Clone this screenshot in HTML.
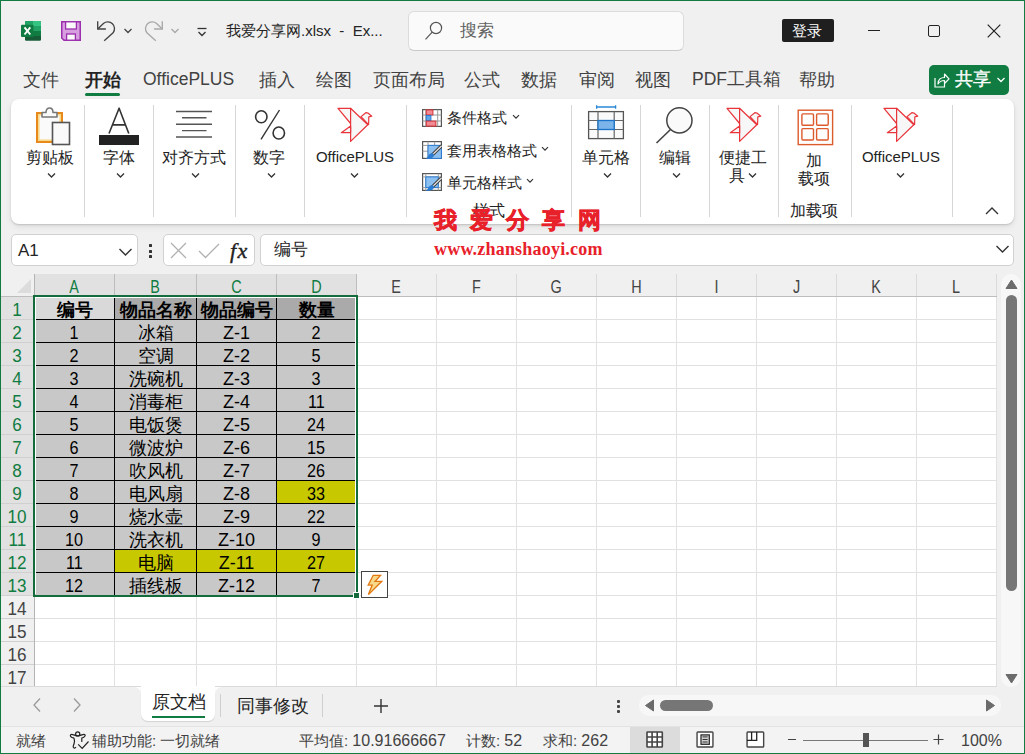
<!DOCTYPE html>
<html><head><meta charset="utf-8">
<style>
*{box-sizing:border-box;margin:0;padding:0}
html,body{width:1025px;height:754px;overflow:hidden;background:#f0f0f0;font-family:"Liberation Sans",sans-serif;color:#242424}
.a{position:absolute}
#win{position:absolute;left:0;top:0;width:1025px;height:754px;border:1px solid #107c41;border-right-width:1px}
.t{position:absolute;white-space:nowrap;line-height:1}
/* ribbon */
#ribbon{position:absolute;left:11px;top:99px;width:1003px;height:125px;background:#fff;border-radius:8px;box-shadow:0 1px 2px rgba(0,0,0,.16),0 3px 6px rgba(0,0,0,.07)}
.sep{position:absolute;top:105px;width:1px;height:112px;background:#d6d6d6}
.lbl{position:absolute;font-size:16px;line-height:1;white-space:nowrap;color:#242424}
.chev{position:absolute}
/* formula bar */
.fbox{position:absolute;top:234px;height:32px;background:#fff;border:1px solid #d1d1d1;border-radius:5px}
/* grid */
#sheet{position:absolute;left:0;top:0}
.vl{position:absolute;top:297px;width:1px;height:389px;background:#e1e1e1}
.hl{position:absolute;left:35px;width:961px;height:1px;background:#e1e1e1}
.ch{position:absolute;top:274px;height:22px;background:#f0f0f0;font-size:18px;line-height:27px;text-align:center;color:#444}
.ch.sel{background:#e1e1e1;color:#107c41}
.chl{position:absolute;top:274px;width:1px;height:22px;background:#bdbdbd}
.rh{position:absolute;left:1px;width:33px;background:#f0f0f0;font-size:18px;line-height:27px;text-align:center;color:#444;border-bottom:1px solid #d0d0d0;height:23px}
.rh.sel{background:#e1e1e1;color:#107c41}
.sx{display:inline-block;transform:scaleX(.8)}.sx2{display:inline-block;transform:scaleX(.95)}
.sx3{display:inline-block;transform:scaleX(.9)}
.cell{position:absolute;height:24px;border:1px solid #000;font-size:18px;line-height:26px;text-align:center;color:#000}
.cell.b{font-weight:bold}
</style></head><body>
<div id="win"></div>

<!-- TITLE BAR -->
<!-- excel icon -->
<svg class="a" style="left:21px;top:21px" width="20" height="20" viewBox="0 0 20 20">
 <rect x="4" y="0" width="16" height="19.8" rx="1.2" fill="#185c37"/>
 <path d="M5.2 0 H12 V5 H4 V1.2 A1.2 1.2 0 0 1 5.2 0 Z" fill="#21a366"/>
 <path d="M12 0 H18.8 A1.2 1.2 0 0 1 20 1.2 V5 H12 Z" fill="#33c481"/>
 <rect x="4" y="5" width="16" height="5" fill="#21a366"/>
 <rect x="4" y="10" width="16" height="5" fill="#107c41"/>
 <rect x="0" y="3.8" width="12.5" height="12.2" rx="1" fill="#107c41"/>
 <path d="M3.5 6.3 L9.3 13.5 M9.3 6.3 L3.5 13.5" stroke="#fff" stroke-width="1.9"/>
</svg>
<!-- save -->
<svg class="a" style="left:61px;top:21px" width="20" height="20" viewBox="0 0 20 20">
 <path d="M0.75 0.75 H19.25 V19.25 H3 L0.75 17 Z" fill="#d79ee0" stroke="#9b2fae" stroke-width="1.5"/>
 <rect x="4.6" y="0.8" width="10.8" height="7.2" fill="#fafafa" stroke="#9b2fae" stroke-width="1.3"/>
 <rect x="5.6" y="13" width="8.8" height="6.2" fill="#fafafa" stroke="#9b2fae" stroke-width="1.3"/>
</svg>
<!-- undo -->
<svg class="a" style="left:96px;top:20px" width="22" height="22" viewBox="0 0 22 22">
 <path d="M1.7 1.2 V9 H9.9" fill="none" stroke="#444" stroke-width="1.35"/>
 <path d="M2 8.7 L7.4 3.4 A6.8 6.8 0 0 1 17.1 12.8 L8.2 20.8" fill="none" stroke="#444" stroke-width="1.35"/>
</svg>
<svg class="a" style="left:123px;top:27px" width="10" height="8" viewBox="0 0 10 8"><path d="M1.5 2 L5 5.5 L8.5 2" fill="none" stroke="#444" stroke-width="1.3"/></svg>
<!-- redo -->
<svg class="a" style="left:143px;top:20px" width="22" height="22" viewBox="0 0 22 22">
 <g transform="translate(21,0) scale(-1,1)">
 <path d="M1.7 1.2 V9 H9.9" fill="none" stroke="#a8a8a8" stroke-width="1.35"/>
 <path d="M2 8.7 L7.4 3.4 A6.8 6.8 0 0 1 17.1 12.8 L8.2 20.8" fill="none" stroke="#a8a8a8" stroke-width="1.35"/>
 </g>
</svg>
<svg class="a" style="left:170px;top:27px" width="10" height="8" viewBox="0 0 10 8"><path d="M1.5 2 L5 5.5 L8.5 2" fill="none" stroke="#a8a8a8" stroke-width="1.3"/></svg>
<!-- customize -->
<svg class="a" style="left:196px;top:26px" width="12" height="12" viewBox="0 0 12 12"><path d="M1.5 2.5 H10.5" stroke="#333" stroke-width="1.3"/><path d="M2.5 6 L6 9.5 L9.5 6" fill="none" stroke="#333" stroke-width="1.3"/></svg>
<div class="t" style="left:226px;top:23px;font-size:15px;color:#242424">我爱分享网.xlsx&nbsp; - &nbsp;Ex...</div>
<!-- search -->
<div class="a" style="left:408px;top:11px;width:276px;height:40px;background:#fafafa;border:1px solid #dcdcdc;border-bottom-color:#c9c9c9;border-radius:6px"></div>
<svg class="a" style="left:424px;top:21px" width="21" height="21" viewBox="0 0 21 21"><circle cx="12" cy="7" r="5.6" fill="none" stroke="#555" stroke-width="1.2"/><path d="M8.2 11.2 L1.5 18.3" stroke="#555" stroke-width="1.2"/></svg>
<div class="t" style="left:460px;top:22px;font-size:17px;color:#616161">搜索</div>
<!-- login -->
<div class="a" style="left:782px;top:19px;width:52px;height:23px;background:#1f1f1f;border-radius:2px"></div>
<div class="t" style="left:792px;top:23px;font-size:15px;color:#fff">登录</div>
<!-- window controls -->
<div class="a" style="left:868px;top:30px;width:12px;height:1px;background:#222"></div>
<div class="a" style="left:928px;top:25px;width:12px;height:12px;border:1.2px solid #222;border-radius:2px"></div>
<svg class="a" style="left:987px;top:24px" width="14" height="14" viewBox="0 0 14 14"><path d="M0.7 0.7 L13.3 13.3 M13.3 0.7 L0.7 13.3" stroke="#222" stroke-width="1.2"/></svg>

<!-- TABS -->
<div class="t" style="left:23px;top:71px;font-size:18px;color:#424242">文件</div>
<div class="t" style="left:85px;top:71px;font-size:18px;color:#242424;font-weight:bold">开始</div>
<div class="a" style="left:85px;top:93px;width:35px;height:3px;background:#107c41;border-radius:2px"></div>
<div class="t" style="left:143px;top:71px;font-size:17.5px;color:#424242">OfficePLUS</div>
<div class="t" style="left:259px;top:71px;font-size:18px;color:#424242">插入</div>
<div class="t" style="left:316px;top:71px;font-size:18px;color:#424242">绘图</div>
<div class="t" style="left:373px;top:71px;font-size:18px;color:#424242">页面布局</div>
<div class="t" style="left:464px;top:71px;font-size:18px;color:#424242">公式</div>
<div class="t" style="left:521px;top:71px;font-size:18px;color:#424242">数据</div>
<div class="t" style="left:579px;top:71px;font-size:18px;color:#424242">审阅</div>
<div class="t" style="left:635px;top:71px;font-size:18px;color:#424242">视图</div>
<div class="t" style="left:692px;top:71px;font-size:17.5px;color:#424242">PDF工具箱</div>
<div class="t" style="left:799px;top:71px;font-size:18px;color:#424242">帮助</div>
<!-- share -->
<div class="a" style="left:929px;top:65px;width:80px;height:30px;background:#107c41;border-radius:5px"></div>
<svg class="a" style="left:934px;top:72px" width="16" height="16" viewBox="0 0 16 16"><path d="M1 6 V15 H10.5 V12" fill="none" stroke="#fff" stroke-width="1.2"/><path d="M4 12 C4 7 7 5.5 10.5 5.5 V2 L15 6.8 L10.5 11.5 V8.5 C8 8.5 5.5 9.5 4 12 Z" fill="none" stroke="#fff" stroke-width="1.2" stroke-linejoin="round"/></svg>
<div class="t" style="left:955px;top:71px;font-size:17.5px;color:#fff;-webkit-text-stroke:0.35px #fff">共享</div>
<svg class="a" style="left:996px;top:76px" width="10" height="8" viewBox="0 0 10 8"><path d="M1.5 2 L5 5.5 L8.5 2" fill="none" stroke="#fff" stroke-width="1.3"/></svg>

<!-- RIBBON -->
<div id="ribbon"></div>
<div class="sep" style="left:84px"></div>
<div class="sep" style="left:153px"></div>
<div class="sep" style="left:235px"></div>
<div class="sep" style="left:304px"></div>
<div class="sep" style="left:406px"></div>
<div class="sep" style="left:571px"></div>
<div class="sep" style="left:640px"></div>
<div class="sep" style="left:709px"></div>
<div class="sep" style="left:778px"></div>
<div class="sep" style="left:851px"></div>
<div class="sep" style="left:952px"></div>

<!-- clipboard -->
<svg class="a" style="left:34px;top:105px" width="40" height="42" viewBox="0 0 40 42">
 <rect x="3" y="8" width="25" height="29" fill="#fdf3d9" stroke="#e8891c" stroke-width="2"/>
 <rect x="4.8" y="9.8" width="21.4" height="25.4" fill="#fafafa" stroke="#f9d98a" stroke-width="1.6"/>
 <path d="M8 12 V7.5 H12 C12 1.5 19 1.5 19 7.5 H23 V12 Z" fill="#fafafa" stroke="#777" stroke-width="1.6" stroke-linejoin="round"/>
 <rect x="18.5" y="17.5" width="17" height="22" fill="#fafafa" stroke="#555" stroke-width="1.6"/>
</svg>
<div class="lbl" style="left:0px;width:100px;top:150px;text-align:center">剪贴板</div>
<!-- font -->
<svg class="a" style="left:98px;top:106px" width="42" height="40" viewBox="0 0 42 40">
 <path d="M11 27.5 L21.1 2.2 L30.8 27.5 M14.3 18.9 H27.6" fill="none" stroke="#333" stroke-width="1.6" stroke-linejoin="round"/>
 <rect x="1" y="29" width="40" height="10" fill="#222"/>
</svg>
<div class="lbl" style="left:69px;width:100px;top:150px;text-align:center">字体</div>
<!-- align -->
<svg class="a" style="left:175px;top:109px" width="38" height="30" viewBox="0 0 38 30">
 <path d="M1 2.5 H37 M7 8.8 H31.5 M1 15.2 H37 M7 21.6 H31.5 M1 28 H37" stroke="#555" stroke-width="1.4"/>
</svg>
<div class="lbl" style="left:144px;width:100px;top:150px;text-align:center">对齐方式</div>
<!-- number -->
<svg class="a" style="left:252px;top:108px" width="36" height="34" viewBox="0 0 36 34">
 <ellipse cx="9.3" cy="8.8" rx="5.7" ry="6" fill="none" stroke="#333" stroke-width="1.6"/>
 <ellipse cx="26.8" cy="25" rx="5.7" ry="6" fill="none" stroke="#333" stroke-width="1.6"/>
 <path d="M27.5 2 L9 31.3" stroke="#333" stroke-width="1.4"/>
</svg>
<div class="lbl" style="left:219px;width:100px;top:150px;text-align:center">数字</div>
<!-- officeplus -->
<svg class="a bird" style="left:337px;top:106px" width="37" height="37" viewBox="0 0 37 37">
 <g fill="#f7f7f7" stroke="#e8353c" stroke-width="1.2" stroke-linejoin="round">
 <path d="M1 2.3 H13.6 V17.5 Z"/>
 <path d="M24 10.6 L28.8 6.7 L31.2 7.2 L34.8 10.2 L31.8 10.9 L31.6 18.6 Z"/>
 <path d="M13.6 2.3 L30.8 18.7 L13.6 35.4 Z"/>
 <path d="M4.3 26.7 L13.6 19.9 V26.7 Z"/>
 </g>
</svg>
<div class="lbl" style="left:305px;width:100px;top:149px;text-align:center;font-size:15px">OfficePLUS</div>
<!-- chevrons row -->
<svg class="a" style="left:47px;top:172px" width="9" height="7" viewBox="0 0 9 7"><path d="M1 1.5 L4.5 5 L8 1.5" fill="none" stroke="#333" stroke-width="1.3"/></svg>
<svg class="a" style="left:116px;top:172px" width="9" height="7" viewBox="0 0 9 7"><path d="M1 1.5 L4.5 5 L8 1.5" fill="none" stroke="#333" stroke-width="1.3"/></svg>
<svg class="a" style="left:191px;top:172px" width="9" height="7" viewBox="0 0 9 7"><path d="M1 1.5 L4.5 5 L8 1.5" fill="none" stroke="#333" stroke-width="1.3"/></svg>
<svg class="a" style="left:267px;top:172px" width="9" height="7" viewBox="0 0 9 7"><path d="M1 1.5 L4.5 5 L8 1.5" fill="none" stroke="#333" stroke-width="1.3"/></svg>
<svg class="a" style="left:350px;top:172px" width="9" height="7" viewBox="0 0 9 7"><path d="M1 1.5 L4.5 5 L8 1.5" fill="none" stroke="#333" stroke-width="1.3"/></svg>
<svg class="a" style="left:603px;top:172px" width="9" height="7" viewBox="0 0 9 7"><path d="M1 1.5 L4.5 5 L8 1.5" fill="none" stroke="#333" stroke-width="1.3"/></svg>
<svg class="a" style="left:672px;top:172px" width="9" height="7" viewBox="0 0 9 7"><path d="M1 1.5 L4.5 5 L8 1.5" fill="none" stroke="#333" stroke-width="1.3"/></svg>
<svg class="a" style="left:748px;top:172px" width="9" height="7" viewBox="0 0 9 7"><path d="M1 1.5 L4.5 5 L8 1.5" fill="none" stroke="#333" stroke-width="1.3"/></svg>
<svg class="a" style="left:896px;top:172px" width="9" height="7" viewBox="0 0 9 7"><path d="M1 1.5 L4.5 5 L8 1.5" fill="none" stroke="#333" stroke-width="1.3"/></svg>

<!-- styles group -->
<svg class="a" style="left:422px;top:109px" width="20" height="18" viewBox="0 0 20 18">
 <rect x="0.6" y="0.6" width="18.8" height="16.8" fill="#fff" stroke="#555" stroke-width="1.2"/>
 <path d="M3.8 0.6 V17.4 M15.7 0.6 V17.4 M0.6 6 H19.4 M0.6 12 H19.4" stroke="#999" stroke-width="1"/>
 <rect x="4.3" y="0.9" width="6.6" height="5" fill="#f28a93" stroke="#d13438" stroke-width="1"/>
 <rect x="4.3" y="6.5" width="4.6" height="5" fill="#5ea6e8" stroke="#2b7cd3" stroke-width="1"/>
 <rect x="4.3" y="12.1" width="9.6" height="5" fill="#f28a93" stroke="#d13438" stroke-width="1"/>
</svg>
<div class="lbl" style="left:447px;top:110px;font-size:15px">条件格式</div>
<svg class="a" style="left:512px;top:114px" width="8" height="6" viewBox="0 0 8 6"><path d="M1 1.2 L4 4.2 L7 1.2" fill="none" stroke="#333" stroke-width="1.2"/></svg>
<svg class="a" style="left:422px;top:141px" width="20" height="18" viewBox="0 0 20 18">
 <rect x="0.6" y="0.6" width="18.8" height="16.8" fill="#fff" stroke="#555" stroke-width="1.2"/>
 <path d="M0.6 4.4 H19.4 M0.6 10.2 H19.4 M6 0.6 V17.4 M12.6 0.6 V17.4" stroke="#9a9a9a" stroke-width="1"/>
 <path d="M6 4.4 H19.4 V17.4 H6 Z" fill="#8cc0f0" stroke="#2b7cd3" stroke-width="1"/>
 <path d="M19.2 5.2 L10.6 13.6" stroke="#444" stroke-width="3.4" stroke-linecap="round"/>
 <path d="M19.2 5.2 L10.6 13.6" stroke="#e8e8e8" stroke-width="1.2" stroke-linecap="round"/>
 <path d="M10.8 12.2 C8.5 11.8 6.8 13.2 6.2 15 C5.8 16.3 4.8 17 3.6 17.6 C6.5 18.2 10.4 17.6 11.6 15.2 C12.2 14 11.8 12.8 10.8 12.2 Z" fill="#2b7cd3"/>
</svg>
<div class="lbl" style="left:447px;top:143px;font-size:15px">套用表格格式</div>
<svg class="a" style="left:541px;top:146px" width="8" height="6" viewBox="0 0 8 6"><path d="M1 1.2 L4 4.2 L7 1.2" fill="none" stroke="#333" stroke-width="1.2"/></svg>
<svg class="a" style="left:422px;top:173px" width="20" height="18" viewBox="0 0 20 18">
 <rect x="0.6" y="0.6" width="18.8" height="16.8" fill="#fff" stroke="#555" stroke-width="1.2"/>
 <path d="M0.6 3.9 H19.4 M3.8 0.6 V17.4 M16.3 0.6 V17.4 M0.6 14.6 H19.4" stroke="#9a9a9a" stroke-width="1"/>
 <path d="M3.8 3.9 H16.3 V14.6 H3.8 Z" fill="#8cc0f0" stroke="#2b7cd3" stroke-width="1"/>
 <path d="M19.2 5.2 L10.6 13.6" stroke="#444" stroke-width="3.4" stroke-linecap="round"/>
 <path d="M19.2 5.2 L10.6 13.6" stroke="#e8e8e8" stroke-width="1.2" stroke-linecap="round"/>
 <path d="M10.8 12.2 C8.5 11.8 6.8 13.2 6.2 15 C5.8 16.3 4.8 17 3.6 17.6 C6.5 18.2 10.4 17.6 11.6 15.2 C12.2 14 11.8 12.8 10.8 12.2 Z" fill="#2b7cd3"/>
</svg>
<div class="lbl" style="left:447px;top:175px;font-size:15px">单元格样式</div>
<svg class="a" style="left:526px;top:178px" width="8" height="6" viewBox="0 0 8 6"><path d="M1 1.2 L4 4.2 L7 1.2" fill="none" stroke="#333" stroke-width="1.2"/></svg>
<div class="lbl" style="left:439px;width:100px;top:203px;text-align:center">样式</div>

<!-- cells -->
<svg class="a" style="left:587px;top:105px" width="38" height="35" viewBox="0 0 38 35">
 <path d="M9.6 2 H28.6 M9.6 0.3 V3.7 M28.6 0.3 V3.7" stroke="#2b88d8" stroke-width="1.3"/>
 <rect x="1.6" y="6.6" width="34.8" height="27" fill="#fafafa" stroke="#555" stroke-width="1.3"/>
 <path d="M11 6.6 V33.6 M27.2 6.6 V33.6 M1.6 15.5 H36.4 M1.6 24.5 H36.4" stroke="#666" stroke-width="1.2"/>
 <rect x="11" y="15.5" width="16.2" height="9" fill="#7ab4ea" stroke="#1a73c8" stroke-width="1.3"/>
</svg>
<div class="lbl" style="left:556px;width:100px;top:150px;text-align:center">单元格</div>
<!-- edit -->
<svg class="a" style="left:654px;top:106px" width="40" height="40" viewBox="0 0 40 40">
 <circle cx="25.4" cy="14.4" r="12.6" fill="#fafafa" stroke="#444" stroke-width="1.5"/>
 <path d="M16.5 23.5 L2.5 37" stroke="#444" stroke-width="1.6"/>
</svg>
<div class="lbl" style="left:625px;width:100px;top:150px;text-align:center">编辑</div>
<!-- quick tools -->
<svg class="a" style="left:726px;top:106px" width="37" height="37" viewBox="0 0 37 37">
 <g fill="#f7f7f7" stroke="#e8353c" stroke-width="1.2" stroke-linejoin="round">
 <path d="M1 2.3 H13.6 V17.5 Z"/>
 <path d="M24 10.6 L28.8 6.7 L31.2 7.2 L34.8 10.2 L31.8 10.9 L31.6 18.6 Z"/>
 <path d="M13.6 2.3 L30.8 18.7 L13.6 35.4 Z"/>
 <path d="M4.3 26.7 L13.6 19.9 V26.7 Z"/>
 </g>
</svg>
<div class="lbl" style="left:693px;width:100px;top:150px;text-align:center">便捷工</div>
<div class="lbl" style="left:729px;top:168px">具</div>
<!-- addins -->
<svg class="a" style="left:797px;top:109px" width="37" height="37" viewBox="0 0 37 37">
 <g fill="none" stroke="#dc5a2c" stroke-width="1.4">
 <rect x="1.2" y="1.2" width="34.4" height="34.4"/>
 <rect x="4.9" y="4.9" width="11.6" height="11.4" rx="1"/>
 <rect x="19.6" y="4.9" width="11.6" height="11.4" rx="1"/>
 <rect x="4.9" y="19.6" width="11.6" height="11.4" rx="1"/>
 <rect x="19.6" y="19.6" width="11.6" height="11.4" rx="1"/>
 </g>
</svg>
<div class="lbl" style="left:764px;width:100px;top:153px;text-align:center">加</div>
<div class="lbl" style="left:764px;width:100px;top:171px;text-align:center">载项</div>
<div class="lbl" style="left:764px;width:100px;top:203px;text-align:center">加载项</div>
<!-- officeplus 2 -->
<svg class="a" style="left:883px;top:106px" width="37" height="37" viewBox="0 0 37 37">
 <g fill="#f7f7f7" stroke="#e8353c" stroke-width="1.2" stroke-linejoin="round">
 <path d="M1 2.3 H13.6 V17.5 Z"/>
 <path d="M24 10.6 L28.8 6.7 L31.2 7.2 L34.8 10.2 L31.8 10.9 L31.6 18.6 Z"/>
 <path d="M13.6 2.3 L30.8 18.7 L13.6 35.4 Z"/>
 <path d="M4.3 26.7 L13.6 19.9 V26.7 Z"/>
 </g>
</svg>
<div class="lbl" style="left:851px;width:100px;top:149px;text-align:center;font-size:15px">OfficePLUS</div>
<svg class="a" style="left:985px;top:206px" width="14" height="10" viewBox="0 0 14 10"><path d="M1 8 L7 2 L13 8" fill="none" stroke="#333" stroke-width="1.4"/></svg>

<!-- watermark -->
<div class="t" style="left:434px;top:209px;font-size:23px;font-weight:900;color:#e8202a;letter-spacing:13px;-webkit-text-stroke:0.7px #e8202a">我爱分享网</div>


<!-- FORMULA BAR -->
<div class="fbox" style="left:11px;width:127px"></div>
<div class="t" style="left:18px;top:242px;font-size:17px;color:#242424">A1</div>
<svg class="a" style="left:118px;top:247px" width="15" height="10" viewBox="0 0 15 10"><path d="M1.5 2 L7.5 8 L13.5 2" fill="none" stroke="#333" stroke-width="1.4"/></svg>
<div class="a" style="left:149px;top:244px;width:3px;height:3px;background:#333;border-radius:0.5px"></div>
<div class="a" style="left:149px;top:249.5px;width:3px;height:3px;background:#333;border-radius:0.5px"></div>
<div class="a" style="left:149px;top:255px;width:3px;height:3px;background:#333;border-radius:0.5px"></div>
<div class="fbox" style="left:163px;width:92px"></div>
<svg class="a" style="left:170px;top:242px" width="17" height="17" viewBox="0 0 17 17"><path d="M1 1 L16 16 M16 1 L1 16" stroke="#b0b0b0" stroke-width="1.3"/></svg>
<svg class="a" style="left:198px;top:242px" width="22" height="17" viewBox="0 0 22 17"><path d="M1 9 L7.5 15.5 L21 2" fill="none" stroke="#b0b0b0" stroke-width="1.3"/></svg>
<div class="t" style="left:230px;top:240px;font-size:22px;font-family:'Liberation Serif',serif;font-style:italic;color:#222;letter-spacing:1.5px;-webkit-text-stroke:0.4px #222">fx</div>
<div class="fbox" style="left:260px;width:754px"></div>
<div class="t" style="left:274px;top:241px;font-size:17px;color:#242424">编号</div>
<svg class="a" style="left:995px;top:244px" width="15" height="10" viewBox="0 0 15 10"><path d="M1.5 2 L7.5 8 L13.5 2" fill="none" stroke="#333" stroke-width="1.4"/></svg>
<div class="t" style="left:434px;top:240px;font-size:18px;font-weight:bold;color:#e8202a;font-family:'Liberation Serif',serif;letter-spacing:0.2px">www.zhanshaoyi.com</div>


<!-- SHEET -->
<div class="a" style="left:35px;top:297px;width:962px;height:389px;background:#fff"></div>
<div class="a" style="left:1px;top:274px;width:33px;height:22px;background:#f0f0f0"></div>
<svg class="a" style="left:16px;top:278px" width="16" height="16" viewBox="0 0 16 16"><path d="M15 1 V15 H1 Z" fill="#dcdcdc"/></svg>
<div class="a" style="left:34px;top:274px;width:1px;height:412px;background:#b4b4b4"></div>
<div class="a" style="left:1px;top:296px;width:996px;height:1px;background:#bdbdbd"></div>
<div class="vl" style="left:114px"></div>
<div class="vl" style="left:196px"></div>
<div class="vl" style="left:276px"></div>
<div class="vl" style="left:356px"></div>
<div class="vl" style="left:436px"></div>
<div class="vl" style="left:516px"></div>
<div class="vl" style="left:596px"></div>
<div class="vl" style="left:676px"></div>
<div class="vl" style="left:756px"></div>
<div class="vl" style="left:836px"></div>
<div class="vl" style="left:916px"></div>
<div class="vl" style="left:996px"></div>
<div class="hl" style="top:319px"></div>
<div class="hl" style="top:342px"></div>
<div class="hl" style="top:365px"></div>
<div class="hl" style="top:388px"></div>
<div class="hl" style="top:411px"></div>
<div class="hl" style="top:434px"></div>
<div class="hl" style="top:457px"></div>
<div class="hl" style="top:480px"></div>
<div class="hl" style="top:503px"></div>
<div class="hl" style="top:526px"></div>
<div class="hl" style="top:549px"></div>
<div class="hl" style="top:572px"></div>
<div class="hl" style="top:595px"></div>
<div class="hl" style="top:618px"></div>
<div class="hl" style="top:641px"></div>
<div class="hl" style="top:664px"></div>
<div class="ch sel" style="left:35px;width:79px"><span class="sx">A</span></div>
<div class="chl" style="left:114px;background:#bdbdbd"></div>
<div class="ch sel" style="left:115px;width:81px"><span class="sx">B</span></div>
<div class="chl" style="left:196px;background:#bdbdbd"></div>
<div class="ch sel" style="left:197px;width:79px"><span class="sx">C</span></div>
<div class="chl" style="left:276px;background:#bdbdbd"></div>
<div class="ch sel" style="left:277px;width:79px"><span class="sx">D</span></div>
<div class="chl" style="left:356px;background:#bdbdbd"></div>
<div class="ch" style="left:357px;width:79px"><span class="sx">E</span></div>
<div class="chl" style="left:436px;background:#dadada"></div>
<div class="ch" style="left:437px;width:79px"><span class="sx">F</span></div>
<div class="chl" style="left:516px;background:#dadada"></div>
<div class="ch" style="left:517px;width:79px"><span class="sx">G</span></div>
<div class="chl" style="left:596px;background:#dadada"></div>
<div class="ch" style="left:597px;width:79px"><span class="sx">H</span></div>
<div class="chl" style="left:676px;background:#dadada"></div>
<div class="ch" style="left:677px;width:79px"><span class="sx">I</span></div>
<div class="chl" style="left:756px;background:#dadada"></div>
<div class="ch" style="left:757px;width:79px"><span class="sx">J</span></div>
<div class="chl" style="left:836px;background:#dadada"></div>
<div class="ch" style="left:837px;width:79px"><span class="sx">K</span></div>
<div class="chl" style="left:916px;background:#dadada"></div>
<div class="ch" style="left:917px;width:79px"><span class="sx">L</span></div>
<div class="chl" style="left:996px;background:#dadada"></div>
<div class="rh sel" style="top:297px"><span class="sx2">1</span></div>
<div class="rh sel" style="top:320px"><span class="sx2">2</span></div>
<div class="rh sel" style="top:343px"><span class="sx2">3</span></div>
<div class="rh sel" style="top:366px"><span class="sx2">4</span></div>
<div class="rh sel" style="top:389px"><span class="sx2">5</span></div>
<div class="rh sel" style="top:412px"><span class="sx2">6</span></div>
<div class="rh sel" style="top:435px"><span class="sx2">7</span></div>
<div class="rh sel" style="top:458px"><span class="sx2">8</span></div>
<div class="rh sel" style="top:481px"><span class="sx2">9</span></div>
<div class="rh sel" style="top:504px"><span class="sx2">10</span></div>
<div class="rh sel" style="top:527px"><span class="sx2">11</span></div>
<div class="rh sel" style="top:550px"><span class="sx2">12</span></div>
<div class="rh sel" style="top:573px"><span class="sx2">13</span></div>
<div class="rh" style="top:596px"><span class="sx2">14</span></div>
<div class="rh" style="top:619px"><span class="sx2">15</span></div>
<div class="rh" style="top:642px"><span class="sx2">16</span></div>
<div class="rh" style="top:665px"><span class="sx2">17</span></div>
<div class="cell b" style="left:34px;top:296px;width:81px;background:#d9d9d9">编号</div>
<div class="cell b" style="left:114px;top:296px;width:83px;background:#aaaaaa">物品名称</div>
<div class="cell b" style="left:196px;top:296px;width:81px;background:#aaaaaa">物品编号</div>
<div class="cell b" style="left:276px;top:296px;width:81px;background:#aaaaaa">数量</div>
<div class="cell" style="left:34px;top:319px;width:81px;background:#c8c8c8"><span class="sx3">1</span></div>
<div class="cell" style="left:114px;top:319px;width:83px;background:#c8c8c8">冰箱</div>
<div class="cell" style="left:196px;top:319px;width:81px;background:#c8c8c8">Z-1</div>
<div class="cell" style="left:276px;top:319px;width:81px;background:#c8c8c8"><span class="sx3">2</span></div>
<div class="cell" style="left:34px;top:342px;width:81px;background:#c8c8c8"><span class="sx3">2</span></div>
<div class="cell" style="left:114px;top:342px;width:83px;background:#c8c8c8">空调</div>
<div class="cell" style="left:196px;top:342px;width:81px;background:#c8c8c8">Z-2</div>
<div class="cell" style="left:276px;top:342px;width:81px;background:#c8c8c8"><span class="sx3">5</span></div>
<div class="cell" style="left:34px;top:365px;width:81px;background:#c8c8c8"><span class="sx3">3</span></div>
<div class="cell" style="left:114px;top:365px;width:83px;background:#c8c8c8">洗碗机</div>
<div class="cell" style="left:196px;top:365px;width:81px;background:#c8c8c8">Z-3</div>
<div class="cell" style="left:276px;top:365px;width:81px;background:#c8c8c8"><span class="sx3">3</span></div>
<div class="cell" style="left:34px;top:388px;width:81px;background:#c8c8c8"><span class="sx3">4</span></div>
<div class="cell" style="left:114px;top:388px;width:83px;background:#c8c8c8">消毒柜</div>
<div class="cell" style="left:196px;top:388px;width:81px;background:#c8c8c8">Z-4</div>
<div class="cell" style="left:276px;top:388px;width:81px;background:#c8c8c8"><span class="sx3">11</span></div>
<div class="cell" style="left:34px;top:411px;width:81px;background:#c8c8c8"><span class="sx3">5</span></div>
<div class="cell" style="left:114px;top:411px;width:83px;background:#c8c8c8">电饭煲</div>
<div class="cell" style="left:196px;top:411px;width:81px;background:#c8c8c8">Z-5</div>
<div class="cell" style="left:276px;top:411px;width:81px;background:#c8c8c8"><span class="sx3">24</span></div>
<div class="cell" style="left:34px;top:434px;width:81px;background:#c8c8c8"><span class="sx3">6</span></div>
<div class="cell" style="left:114px;top:434px;width:83px;background:#c8c8c8">微波炉</div>
<div class="cell" style="left:196px;top:434px;width:81px;background:#c8c8c8">Z-6</div>
<div class="cell" style="left:276px;top:434px;width:81px;background:#c8c8c8"><span class="sx3">15</span></div>
<div class="cell" style="left:34px;top:457px;width:81px;background:#c8c8c8"><span class="sx3">7</span></div>
<div class="cell" style="left:114px;top:457px;width:83px;background:#c8c8c8">吹风机</div>
<div class="cell" style="left:196px;top:457px;width:81px;background:#c8c8c8">Z-7</div>
<div class="cell" style="left:276px;top:457px;width:81px;background:#c8c8c8"><span class="sx3">26</span></div>
<div class="cell" style="left:34px;top:480px;width:81px;background:#c8c8c8"><span class="sx3">8</span></div>
<div class="cell" style="left:114px;top:480px;width:83px;background:#c8c8c8">电风扇</div>
<div class="cell" style="left:196px;top:480px;width:81px;background:#c8c8c8">Z-8</div>
<div class="cell" style="left:276px;top:480px;width:81px;background:#c8c800"><span class="sx3">33</span></div>
<div class="cell" style="left:34px;top:503px;width:81px;background:#c8c8c8"><span class="sx3">9</span></div>
<div class="cell" style="left:114px;top:503px;width:83px;background:#c8c8c8">烧水壶</div>
<div class="cell" style="left:196px;top:503px;width:81px;background:#c8c8c8">Z-9</div>
<div class="cell" style="left:276px;top:503px;width:81px;background:#c8c8c8"><span class="sx3">22</span></div>
<div class="cell" style="left:34px;top:526px;width:81px;background:#c8c8c8"><span class="sx3">10</span></div>
<div class="cell" style="left:114px;top:526px;width:83px;background:#c8c8c8">洗衣机</div>
<div class="cell" style="left:196px;top:526px;width:81px;background:#c8c8c8">Z-10</div>
<div class="cell" style="left:276px;top:526px;width:81px;background:#c8c8c8"><span class="sx3">9</span></div>
<div class="cell" style="left:34px;top:549px;width:81px;background:#c8c8c8"><span class="sx3">11</span></div>
<div class="cell" style="left:114px;top:549px;width:83px;background:#c8c800">电脑</div>
<div class="cell" style="left:196px;top:549px;width:81px;background:#c8c800">Z-11</div>
<div class="cell" style="left:276px;top:549px;width:81px;background:#c8c800"><span class="sx3">27</span></div>
<div class="cell" style="left:34px;top:572px;width:81px;background:#c8c8c8"><span class="sx3">12</span></div>
<div class="cell" style="left:114px;top:572px;width:83px;background:#c8c8c8">插线板</div>
<div class="cell" style="left:196px;top:572px;width:81px;background:#c8c8c8">Z-12</div>
<div class="cell" style="left:276px;top:572px;width:81px;background:#c8c8c8"><span class="sx3">7</span></div>

<!-- BOTTOM -->
<!-- vertical scrollbar -->
<div class="a" style="left:1001px;top:274px;width:20px;height:413px;background:#f7f7f7;border-radius:10px"></div>
<svg class="a" style="left:1005px;top:279px" width="13" height="11" viewBox="0 0 13 11"><path d="M6.5 1 L12 9.5 H1 Z" fill="#6b6b6b" stroke="#6b6b6b" stroke-width="1" stroke-linejoin="round"/></svg>
<div class="a" style="left:1006px;top:295px;width:11px;height:296px;background:#767676;border-radius:6px"></div>
<svg class="a" style="left:1005px;top:673px" width="13" height="11" viewBox="0 0 13 11"><path d="M6.5 10 L12 1.5 H1 Z" fill="#6b6b6b" stroke="#6b6b6b" stroke-width="1" stroke-linejoin="round"/></svg>

<!-- sheet tabs -->
<div class="a" style="left:1px;top:686px;width:996px;height:1px;background:#dadada"></div>
<div class="a" style="left:135px;top:687px;width:86px;height:8px;background:#fff"></div>
<div class="a" style="left:1px;top:687px;width:140px;height:39px;background:#f0f0f0;border-top-right-radius:7px"></div>
<div class="a" style="left:215px;top:687px;width:809px;height:39px;background:#f0f0f0;border-top-left-radius:7px"></div>
<div class="a" style="left:141px;top:686px;width:74px;height:35px;background:#fff;border-radius:0 0 7px 7px;box-shadow:0 1px 1px rgba(0,0,0,.12)"></div>
<svg class="a" style="left:31px;top:697px" width="12" height="16" viewBox="0 0 12 16"><path d="M9 1.5 L3 8 L9 14.5" fill="none" stroke="#9a9a9a" stroke-width="1.3"/></svg>
<svg class="a" style="left:71px;top:697px" width="12" height="16" viewBox="0 0 12 16"><path d="M3 1.5 L9 8 L3 14.5" fill="none" stroke="#9a9a9a" stroke-width="1.3"/></svg>
<div class="t" style="left:152px;top:693px;font-size:18px;color:#242424">原文档</div>
<div class="a" style="left:152px;top:716px;width:53px;height:2px;background:#107c41"></div>
<div class="a" style="left:220px;top:694px;width:1px;height:23px;background:#cfcfcf"></div>
<div class="t" style="left:237px;top:697px;font-size:18px;color:#242424">同事修改</div>
<div class="a" style="left:322px;top:694px;width:1px;height:23px;background:#cfcfcf"></div>
<svg class="a" style="left:373px;top:698px" width="16" height="16" viewBox="0 0 16 16"><path d="M8 1 V15 M1 8 H15" stroke="#333" stroke-width="1.4"/></svg>
<div class="a" style="left:617px;top:700px;width:3px;height:3px;background:#444;border-radius:1px"></div>
<div class="a" style="left:617px;top:705px;width:3px;height:3px;background:#444;border-radius:1px"></div>
<div class="a" style="left:617px;top:710px;width:3px;height:3px;background:#444;border-radius:1px"></div>
<!-- h scrollbar -->
<div class="a" style="left:639px;top:695px;width:362px;height:21px;background:#f7f7f7;border-radius:10px"></div>
<svg class="a" style="left:644px;top:699px" width="11" height="13" viewBox="0 0 11 13"><path d="M1.5 6.5 L9.5 1 V12 Z" fill="#6b6b6b" stroke="#6b6b6b" stroke-width="1" stroke-linejoin="round"/></svg>
<div class="a" style="left:660px;top:700px;width:53px;height:11px;background:#767676;border-radius:6px"></div>
<svg class="a" style="left:985px;top:699px" width="11" height="13" viewBox="0 0 11 13"><path d="M9.5 6.5 L1.5 1 V12 Z" fill="#6b6b6b" stroke="#6b6b6b" stroke-width="1" stroke-linejoin="round"/></svg>

<!-- status bar -->
<div class="a" style="left:1px;top:726px;width:1023px;height:27px;background:#f3f3f3;border-top:1px solid #e3e3e3"></div>
<div class="t" style="left:16px;top:733px;font-size:15px;color:#424242">就绪</div>
<svg class="a" style="left:64px;top:728px" width="26" height="24" viewBox="0 0 26 24">
 <circle cx="13.7" cy="5.9" r="2.1" fill="none" stroke="#222" stroke-width="1.2"/>
 <path d="M9.5 10 C7 9.5 5.8 8 6.6 6.8 C7.6 5.5 9.5 7.2 13.7 7.8 C18 7.2 20 5.5 21 6.8 C21.8 8 20 9.5 17.8 10 V13.5" fill="none" stroke="#222" stroke-width="1.2" stroke-linecap="round"/>
 <path d="M9.8 10 C10.8 12 10.5 15 9.4 17.5 C8.5 19.5 10.5 21 11.7 19.5" fill="none" stroke="#222" stroke-width="1.2" stroke-linecap="round"/>
 <path d="M14.2 16.3 L18.2 20.3 L24.5 13.5" fill="none" stroke="#222" stroke-width="1.2"/>
</svg>
<div class="t" style="left:92px;top:733px;font-size:15px;color:#424242">辅助功能: 一切就绪</div>
<div class="t" style="left:299px;top:733px;font-size:15px;color:#424242">平均值: <span style="font-size:16px">10.91666667</span></div>
<div class="t" style="left:466px;top:733px;font-size:15px;color:#424242">计数: <span style="font-size:16px">52</span></div>
<div class="t" style="left:543px;top:733px;font-size:15px;color:#424242">求和: <span style="font-size:16px">262</span></div>
<div class="a" style="left:630px;top:727px;width:50px;height:26px;background:#dcdcdc"></div>
<svg class="a" style="left:646px;top:731px" width="18" height="17" viewBox="0 0 18 17"><rect x="1" y="1" width="15.3" height="15" rx="0.6" fill="#fff" stroke="#444" stroke-width="1.6"/><path d="M6.1 1 V16 M11.2 1 V16 M1 6 H16.3 M1 11 H16.3" stroke="#444" stroke-width="1.6"/></svg>
<svg class="a" style="left:696px;top:731px" width="18" height="17" viewBox="0 0 18 17"><rect x="1.05" y="1.05" width="15.9" height="14.9" rx="0.8" fill="#fff" stroke="#444" stroke-width="1.4"/><rect x="5" y="3.9" width="8.3" height="9.4" fill="#cfcfcf" stroke="#222" stroke-width="1.2"/><path d="M6.6 5.9 H11.6 M6.6 8.5 H11.6 M6.6 11 H11.6" stroke="#333" stroke-width="1"/></svg>
<svg class="a" style="left:746px;top:731px" width="19" height="17" viewBox="0 0 19 17"><rect x="1.05" y="1.05" width="16.6" height="15" rx="0.8" fill="#fff" stroke="#444" stroke-width="1.4"/><path d="M5.6 1 V9.4 M1 9.4 H10.7 V1" fill="none" stroke="#222" stroke-width="1.3"/></svg>
<div class="a" style="left:788px;top:739px;width:8px;height:1.2px;background:#444"></div>
<div class="a" style="left:803px;top:740px;width:125px;height:1px;background:#777"></div>
<div class="a" style="left:863px;top:733px;width:6px;height:14px;background:#555"></div>
<svg class="a" style="left:933px;top:734px" width="11" height="11" viewBox="0 0 11 11"><path d="M5.5 0.5 V10.5 M0.5 5.5 H10.5" stroke="#444" stroke-width="1.2"/></svg>
<div class="t" style="left:961px;top:733px;font-size:16px;color:#424242">100%</div>

<!-- selection -->
<div class="a" style="left:33px;top:295px;width:325px;height:302px;border:2px solid #146c3c"></div>
<div class="a" style="left:35px;top:297px;width:321px;height:297px;border:1px solid #fff;border-bottom:none"></div>
<div class="a" style="left:354px;top:593px;width:5px;height:5px;background:#146c3c;outline:1px solid #fff"></div>
<!-- quick analysis -->
<div class="a" style="left:361px;top:571px;width:27px;height:27px;background:#fff;border:1px solid #444"></div>
<svg class="a" style="left:364px;top:574px" width="22" height="21" viewBox="0 0 22 21"><path d="M9.2 1.3 H16.6 L11.1 7.3 H17.8 L4.4 20.6 L8.2 11.1 H4.2 Z" fill="#f8d98a" stroke="#e27810" stroke-width="1.3" stroke-linejoin="miter"/></svg>
<!-- window border on top -->
<div class="a" style="left:0;top:0;width:1025px;height:754px;border:1px solid #107c41"></div>

</body></html>
